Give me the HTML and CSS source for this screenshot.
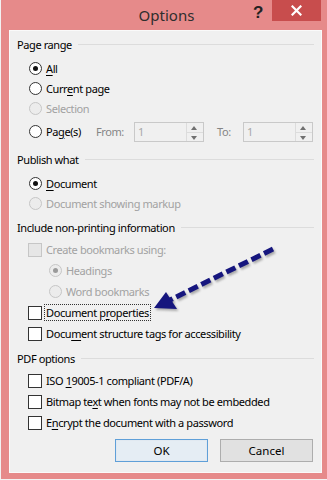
FILE: index.html
```html
<!DOCTYPE html>
<html>
<head>
<meta charset="utf-8">
<link rel="stylesheet" href="styles.css">
</head>
<body>
<div class="window">
  <div class="titlebar">
    <div class="title">Options</div>
    <div class="help">?</div>
    <div class="close">
      <svg width="11" height="11" viewBox="0 0 11 11"><path d="M1.5 1.5 L9.5 9.5 M9.5 1.5 L1.5 9.5" stroke="#fff" stroke-width="2.2" stroke-linecap="square"/></svg>
    </div>
  </div>
  <div class="content">
    <div class="group-head"><span>Page range</span><i></i></div>
    <div class="list tight">
      <div class="row"><span class="radio on"></span><span class="lbl"><u>A</u>ll</span></div>
      <div class="row"><span class="radio"></span><span class="lbl">Curr<u>e</u>nt page</span></div>
      <div class="row dis"><span class="radio"></span><span class="lbl">Selection</span></div>
      <div class="row pages">
        <div class="pg"><span class="radio"></span><span class="lbl">Pa<u>g</u>e(s)</span></div>
        <span class="flbl">From:</span>
        <div class="spin"><span class="val">1</span><span class="btns"><b class="up"></b><b class="dn"></b></span></div>
        <span class="tlbl">To:</span>
        <div class="spin"><span class="val">1</span><span class="btns"><b class="up"></b><b class="dn"></b></span></div>
      </div>
    </div>

    <div class="group-head g2"><span>Publish what</span><i></i></div>
    <div class="list tight">
      <div class="row"><span class="radio on"></span><span class="lbl"><u>D</u>ocument</span></div>
      <div class="row dis"><span class="radio"></span><span class="lbl">Document showing markup</span></div>
    </div>

    <div class="group-head g3"><span>Include non-printing information</span><i></i></div>
    <div class="list">
      <div class="row dis"><span class="check"></span><span class="lbl">Create bookmarks using:</span></div>
      <div class="row dis sub"><span class="radio on"></span><span class="lbl">Headings</span></div>
      <div class="row dis sub"><span class="radio"></span><span class="lbl">Word bookmarks</span></div>
      <div class="row"><span class="check"></span><span class="lbl focus">Document p<u>r</u>operties</span></div>
      <div class="row"><span class="check"></span><span class="lbl">Docu<u>m</u>ent structure tags for accessibility</span></div>
    </div>

    <div class="group-head g4"><span>PDF options</span><i></i></div>
    <div class="list">
      <div class="row"><span class="check"></span><span class="lbl">ISO <u>1</u>9005-1 compliant (PDF/A)</span></div>
      <div class="row"><span class="check"></span><span class="lbl">Bitmap te<u>x</u>t when fonts may not be embedded</span></div>
      <div class="row"><span class="check"></span><span class="lbl">E<u>n</u>crypt the document with a password</span></div>
    </div>

    <div class="buttons">
      <button class="btn default">OK</button>
      <button class="btn">Cancel</button>
    </div>
  </div>

  <svg class="arrow" width="327" height="480" viewBox="0 0 327 480">
    <defs>
      <filter id="blur" x="-20%" y="-20%" width="140%" height="140%"><feGaussianBlur stdDeviation="1.2"/></filter>
    </defs>
    <g filter="url(#blur)" opacity="0.45" transform="translate(1.5,2)">
      <path d="M273 249 L170 300" stroke="#555" stroke-width="5" stroke-dasharray="10 4" fill="none"/>
      <polygon points="154,308 166,292 177,309" fill="#555"/>
    </g>
    <path d="M273 249 L170 300" stroke="#16167e" stroke-width="5" stroke-dasharray="10 4" fill="none"/>
    <polygon points="154,308 166,292 177,309" fill="#16167e"/>
  </svg>
</div>
</body>
</html>
```

FILE: styles.css
```css
* { box-sizing: border-box; }
html, body { margin: 0; padding: 0; }
body {
  background: #f2f2f2;
  width: 327px;
  height: 480px;
  overflow: hidden;
  font-family: "Noto Sans", "Open Sans", sans-serif;
  font-size: 11px;
  letter-spacing: -0.4px;
  color: #000;
}
.window {
  position: relative;
  margin-left: 1px;
  width: 326px;
  height: 479px;
  background: #e68a8a;
  padding: 0 5px 0 8px;
}
.titlebar {
  position: relative;
  height: 30px;
  display: flex;
  align-items: flex-start;
  justify-content: center;
}
.title {
  font-family: "Noto Sans", sans-serif;
  font-size: 15px;
  letter-spacing: 0;
  color: #2e2e2e;
  margin-top: 5px;
  margin-left: 2px;
}
.help {
  position: absolute;
  left: 244px;
  top: 3px;
  font-family: "Liberation Sans", sans-serif;
  font-weight: bold;
  font-size: 17px;
  color: #222;
}
.close {
  position: absolute;
  left: 263px;
  top: 0;
  width: 49px;
  height: 21px;
  background: #c84d4d;
  display: flex;
  align-items: center;
  justify-content: center;
}
.content {
  height: 443px;
  background: #f0f0f0;
  border: 1px solid #fafafa;
  padding: 5px 7px 0 7px;
}
.group-head {
  display: flex;
  align-items: center;
  height: 16px;
  color: #000;
}
.group-head i {
  flex: 1;
  height: 1px;
  background: #dcdcdc;
  margin-left: 6px;
  margin-top: 1px;
}
.g2 { margin-top: 8px; }
.g3 { margin-top: 6px; }
.g4 { margin-top: 6px; }
.list { padding-left: 11px; margin-top: 4px; }
.list.tight { margin-top: 6px; }
.row {
  display: flex;
  align-items: center;
  height: 21px;
}
.tight .row { height: 20px; }
.row.sub { padding-left: 20px; }
.lbl { margin-left: 4px; white-space: nowrap; line-height: 15px; }
.lbl u { text-decoration-thickness: 1px; text-underline-offset: 2px; }
.dis .lbl { color: #a2a2a2; }
.focus { outline: 1px dotted #333; outline-offset: 0; padding: 0 1px; margin-left: 3px; }

.radio {
  width: 13px;
  height: 13px;
  border-radius: 50%;
  border: 1px solid #333;
  background: #fff;
  position: relative;
  flex: none;
  margin-left: 1px;
}
.radio.on::after {
  content: "";
  position: absolute;
  left: 3px; top: 3px;
  width: 5px; height: 5px;
  border-radius: 50%;
  background: #111;
}
.dis .radio { border-color: #c6c6c6; background: #ececec; }
.dis .radio.on::after { background: #9a9a9a; }
.check {
  width: 14px;
  height: 14px;
  border: 1px solid #333;
  background: #fff;
  flex: none;
}
.dis .check { border-color: #c6c6c6; background: #e6e6e6; }

.row.pages { height: 24px; margin-top: 1px; }
.pg { display: flex; align-items: center; width: 68px; }
.flbl, .tlbl { color: #858585; }
.flbl { width: 38px; }
.tlbl { width: 26px; margin-left: 13px; }
.spin {
  width: 70px;
  height: 20px;
  border: 1px solid #c9c9c9;
  background: #f0f0f0;
  display: flex;
  margin-top: 2px;
}
.val { flex: 1; color: #a8a8a8; padding-left: 3px; line-height: 18px; }
.btns {
  width: 17px;
  display: flex;
  flex-direction: column;
  border-left: 1px solid #dcdcdc;
}
.btns b { flex: 1; position: relative; }
.btns b.up { border-bottom: 1px solid #dcdcdc; }
.btns b::after {
  content: "";
  position: absolute;
  left: 4px;
  border-left: 3.5px solid transparent;
  border-right: 3.5px solid transparent;
}
.btns b.up::after { top: 3px; border-bottom: 4px solid #707070; }
.btns b.dn::after { top: 3px; border-top: 4px solid #707070; }

.buttons {
  display: flex;
  justify-content: flex-end;
  gap: 12px;
  margin-top: 6px;
  padding-right: 1px;
}
.btn {
  width: 93px;
  height: 23px;
  font-family: inherit;
  font-size: 11.5px;
  letter-spacing: 0;
  color: #000;
  background: #e1e1e1;
  border: 1px solid #adadad;
  padding: 0;
}
.btn.default {
  border-color: #5f9fd8;
  background: #e5edf4;
  box-shadow: inset 0 0 0 1px #e1e9f1;
}
.arrow {
  position: absolute;
  left: -1px;
  top: 0;
  pointer-events: none;
}
```
